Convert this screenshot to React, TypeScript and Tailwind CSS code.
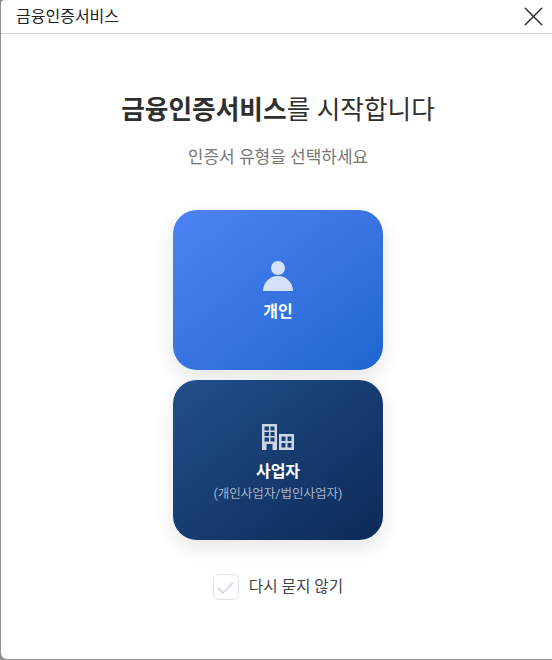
import React from 'react';
import { X, Check } from 'lucide-react';

const font = "font-['Roboto','Noto_Sans_CJK_KR',sans-serif]";

const PersonIcon = () => (
  <svg width="30" height="30" viewBox="0 0 30 30" fill="#d6e2f9">
    <circle cx="15" cy="7" r="7" />
    <path d="M0 30a15 15 0 0 1 30 0z" />
  </svg>
);

const BuildingIcon = () => (
  <svg width="32" height="27" viewBox="0 0 32 27">
    <path fill="#cdd6e4" fillRule="evenodd" d="M0 0h15v26h-4.5v-6h-6v6H0zM2.5 2.5v4h4.5v-4zM8.5 2.5v4h4v-4zM2.5 8v4h4.5V8zM8.5 8v4h4V8zM2.5 13.5v4h4.5v-4zM8.5 13.5v4h4v-4z" />
    <path fill="#cdd6e4" fillRule="evenodd" d="M17 10h15v16H17zM19.5 12.5v4.5h4v-4.5zM25.5 12.5v4.5h4v-4.5zM19.5 19v4.5h4V19zM25.5 19v4.5h4V19z" />
  </svg>
);

export default function App() {
  return (
    <div className={`w-[552px] h-[660px] bg-[#8f8f8f] pl-px pb-px overflow-hidden ${font}`}>
      <div className="h-full bg-white rounded-tl-[4px] rounded-bl-[6px] flex flex-col">
        {/* Title bar */}
        <header className="h-[34px] shrink-0 flex items-center justify-between pl-[15px] pr-[2px] border-b border-[#d4d4d4]">
          <span className="text-[16px] text-[#222]">금융인증서비스</span>
          <X className="w-[33px] h-[33px] text-[#333]" strokeWidth={1.1} />
        </header>

        <main className="flex-1 flex flex-col items-center pl-[3px]">
          <h1 className="mt-[59px] text-[25.7px] leading-[34px] text-[#2f2f2f]">
            <span className="font-bold">금융인증서비스</span>를 시작합니다
          </h1>
          <p className="mt-[18px] text-[17px] leading-[24px] text-[#777]">인증서 유형을 선택하세요</p>

          <div className="mt-[41px] flex flex-col gap-[10px]">
            <button className="w-[210px] h-[160px] rounded-[24px] bg-gradient-to-br from-[#4d83f4] to-[#1f66cf] shadow-[0_8px_20px_rgba(0,0,0,0.1)] flex flex-col items-center pt-[51px]">
              <PersonIcon />
              <span className="mt-[10px] text-[16px] leading-[22px] font-bold text-white">개인</span>
            </button>
            <button className="w-[210px] h-[160px] rounded-[24px] bg-gradient-to-br from-[#225089] to-[#0c2a58] shadow-[0_8px_20px_rgba(0,0,0,0.1)] flex flex-col items-center pt-[44px]">
              <BuildingIcon />
              <span className="mt-[10px] text-[16px] leading-[22px] font-bold text-white">사업자</span>
              <span className="text-[12.5px] leading-[22px] text-[#a7b4c8]">(개인사업자/법인사업자)</span>
            </button>
          </div>

          <label className="mt-[34px] flex items-center gap-[10px]">
            <span className="w-[26px] h-[26px] rounded-[6px] border border-[#dfe2e8] bg-white flex items-center justify-center pt-[3px]">
              <Check className="w-[21px] h-[21px] text-[#d8dadf]" strokeWidth={2.3} />
            </span>
            <span className="text-[15.7px] text-[#444]">다시 묻지 않기</span>
          </label>
        </main>
      </div>
    </div>
  );
}
